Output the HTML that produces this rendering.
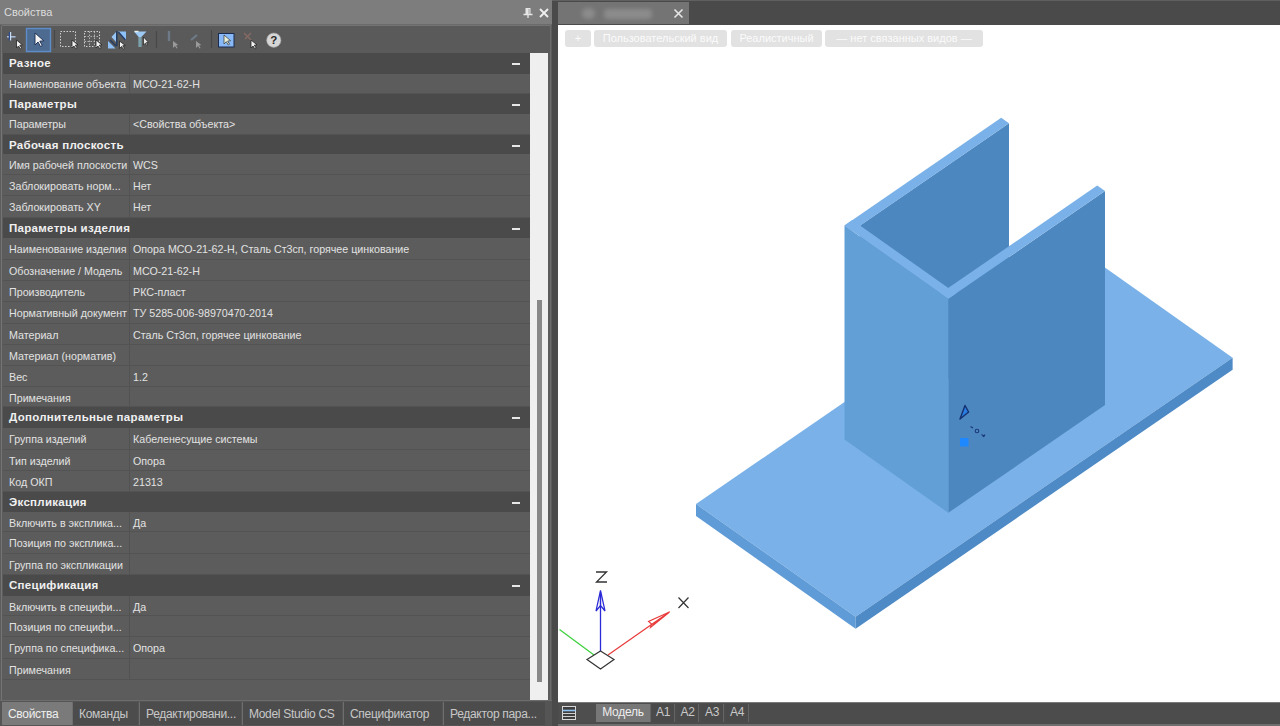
<!DOCTYPE html>
<html><head><meta charset="utf-8">
<style>
*{margin:0;padding:0;box-sizing:border-box}
html,body{width:1280px;height:726px;overflow:hidden;background:#4a4a4a;font-family:"Liberation Sans",sans-serif}
.abs{position:absolute}
#left{left:0;top:0;width:552px;height:726px;background:#5c5c5c}
#title{left:0;top:0;width:552px;height:25px;background:#7d7d7d;border-bottom:1px solid #6a6a6a}
#title .t{left:4px;top:6px;font-size:11px;color:#dcdcdc}
#tb{left:2px;top:25px;width:549px;height:28px;background:#5a5a5a;border-top:1px solid #747474}
#grid{left:3px;top:53px;width:527px;}
.row{position:absolute;left:0;width:527px;background:#5c5c5c;border-bottom:1px solid #535353;font-size:10.7px;color:#e2e2e2;white-space:nowrap}
.row .k{position:absolute;left:6px;top:4.8px}
.row .v{position:absolute;left:130px;top:4.8px}
.row .d{position:absolute;left:126px;top:0;width:1px;height:100%;background:#525252}
.hdr{position:absolute;left:0;width:527px;background:#4a4a4a;font-size:11.5px;letter-spacing:0.3px;font-weight:bold;color:#f0f0f0;white-space:nowrap}
.hdr .k{position:absolute;left:6px;top:3.6px}
.hdr .m{position:absolute;left:509px;top:10px;width:8px;height:2px;background:#e8e8e8}
#scroll{left:530px;top:53px;width:18px;height:647px;background:#efefef}
#thumb{left:537px;top:300px;width:5px;height:382px;background:#888}
#btabs{left:0;top:700px;width:552px;height:26px;background:#555;border-top:1px solid #6c6c6c}
.bt+.bt{border-left:1px solid #6e6e6e}
.bt{position:absolute;top:1px;height:23px;background:#4c4c4c;color:#c8c8c8;font-size:12px;letter-spacing:-0.3px;padding-left:6px;line-height:24px;white-space:nowrap;overflow:hidden}
.bt.on{background:#7a7a7a;color:#eee}
#split{left:552px;top:0;width:6px;height:726px;background:#4a4a4a}
#vp{left:558px;top:25px;width:722px;height:677px;background:#fff}
#vtabs{left:552px;top:0;width:728px;height:25px;background:#4a4a4a;border-top:1px solid #606060}
.vbtn{position:absolute;top:30px;height:17px;background:#e2e2e2;border-radius:3px;color:#fbfbfb;font-size:11px;line-height:17px;text-align:center}
#bstrip{left:558px;top:702px;width:722px;height:24px;background:#4c4c4c;border-top:1px solid #7a7a7a;border-bottom:2px solid #6e6e6e}
.mt{position:absolute;top:1px;height:18px;background:#4a4a4a;border-right:1px solid #646464;color:#c8c8c8;font-size:12px;letter-spacing:-0.25px;line-height:17px;text-align:center}
.mt.on{background:#777;color:#eee}
</style></head><body>
<div id="left" class="abs">
  <div id="title" class="abs"><span class="t abs">Свойства</span>
    <svg class="abs" style="left:520px;top:4px" width="32" height="18">
      <path d="M5.5 4h5v6h-5z" fill="#e6e6e6"/><path d="M3.5 10.5h9M8 10.5v3.5" stroke="#e6e6e6" stroke-width="1.3"/><path d="M9 5v5" stroke="#a0a0a0" stroke-width="1"/>
      <path d="M20 5l8 8M28 5l-8 8" stroke="#f0f0f0" stroke-width="1.8"/>
    </svg>
  </div>
  <div id="tb" class="abs"></div>
  <svg class="abs" style="left:0;top:26px" width="300" height="28">
    <!-- plus + cursor -->
    <path d="M7 10.8h8.5" stroke="#a8bcd8" stroke-width="1.6"/>
    <path d="M9.4 6v8.5" stroke="#2c4a8c" stroke-width="1.2"/>
    <path d="M10.6 6v8.5" stroke="#c8daf4" stroke-width="1.2"/>
    <path d="M16.5 14l0 8 2-2 2 3 1.3-.8-2-3 2.7-.3z" fill="#f2f2f2" stroke="#222" stroke-width=".8"/>
    <!-- active button -->
    <rect x="26.5" y="2.5" width="24" height="23" fill="#4d6b90" stroke="#5d8cc8" stroke-width="1.4"/>
    <path d="M35 7l0 12 3-3 2.5 4.5 1.8-1-2.5-4.3 4-.4z" fill="#f4f4f4" stroke="#1a2a50" stroke-width=".9"/>
    <path d="M54.5 4v18" stroke="#484848" stroke-width="1.2"/>
    <!-- dotted rect -->
    <rect x="60.5" y="5.5" width="15" height="15" fill="none" stroke="#d0d0d0" stroke-width="1" stroke-dasharray="1.5 1.5"/>
    <path d="M72 14l0 8 2-2 2 3 1.3-.8-2-3 2.7-.3z" fill="#f2f2f2" stroke="#222" stroke-width=".8"/>
    <!-- dotted grid -->
    <rect x="84.5" y="5.5" width="15" height="15" fill="none" stroke="#d0d0d0" stroke-width="1" stroke-dasharray="1.5 1.5"/>
    <path d="M84.5 10.5h15M84.5 15.5h15M89.5 5.5v15M94.5 5.5v15" stroke="#c8c8c8" stroke-width=".8" stroke-dasharray="1.5 1.5"/>
    <path d="M96 14l0 8 2-2 2 3 1.3-.8-2-3 2.7-.3z" fill="#f2f2f2" stroke="#222" stroke-width=".8"/>
    <!-- blue triangles -->
    <path d="M116 6v10l-4.5-5z" fill="#98c4f6"/>
    <path d="M116.8 5v15" stroke="#1f3a64" stroke-width="1.4"/>
    <path d="M108 15l7.5 7.5h-7.5z" fill="#8cc0f6"/>
    <path d="M110 14l6 6" stroke="#1f3a64" stroke-width="1.2"/>
    <path d="M118 5.5h8v9z" fill="#8cc0f6"/>
    <path d="M118.5 6l7 8" stroke="#1f3a64" stroke-width="1.2"/>
    <path d="M119.5 15l0 7.5 2-2 1.8 2.6 1.2-.7-1.8-2.6 2.6-.3z" fill="#f2f2f2" stroke="#222" stroke-width=".8"/>
    <!-- funnel -->
    <path d="M134 5.5h12.5l-5.2 5.5v10h-2.6v-10z" fill="#9ccaf4"/>
    <path d="M138.7 11v10h2.6v-10" fill="#7aa0a8"/>
    <path d="M134.5 5.5h4" stroke="#e8f0e8" stroke-width="1.4"/>
    <path d="M143.5 11l0 8 1.8-1.8 1.5 2.4 1-.6-1.5-2.4 2.2-.2z" fill="#e8e8e8" stroke="#222" stroke-width=".7"/>
    <path d="M156.5 5v17" stroke="#484848" stroke-width="1.2"/>
    <!-- greyed -->
    <path d="M169 5v10" stroke="#6e7a88" stroke-width="2.4"/>
    <path d="M173 15l0 7 2-2 1.6 2.5 1-.6-1.6-2.5 2.3-.3z" fill="#9a9a9a"/>
    <path d="M191 14l6-5" stroke="#6e7a88" stroke-width="2.2"/>
    <path d="M196 15l0 7 2-2 1.6 2.5 1-.6-1.6-2.5 2.3-.3z" fill="#9a9a9a"/>
    <path d="M211.5 4v18" stroke="#484848" stroke-width="1.2"/>
    <!-- blue square -->
    <rect x="218.5" y="7.5" width="15.5" height="13.5" fill="#88b8f6" stroke="#1a2a50" stroke-width="1"/>
    <path d="M224 9l0 9 2.3-2.3 2 3.3 1.3-.8-2-3.2 3-.3z" fill="#e8f0d8" stroke="#333" stroke-width=".7"/>
    <!-- red x -->
    <path d="M244 7l8 8M251 7l-6 6" stroke="#8a6a64" stroke-width="1.3"/>
    <path d="M251 14l0 8 2-2 2 3 1.3-.8-2-3 2.7-.3z" fill="#f2f2f2" stroke="#222" stroke-width=".8"/>
    <!-- help -->
    <circle cx="273.8" cy="14.2" r="7.2" fill="#d6d6d6" stroke="#9a9a9a" stroke-width=".6"/>
    <text x="273.8" y="18.4" font-family="Liberation Sans" font-weight="bold" font-size="11.5" fill="#2a2a2a" text-anchor="middle">?</text>
  </svg>
  <div id="grid" class="abs">
    <div class="hdr" style="top:0px;height:21px"><span class="k">Разное</span><span class="m"></span></div>
    <div class="row" style="top:21px;height:20px"><span class="k" style="top:3.5px">Наименование объекта</span><span class="d"></span><span class="v" style="top:3.5px">МСО-21-62-Н</span></div>
    <div class="hdr" style="top:41px;height:20px"><span class="k">Параметры</span><span class="m"></span></div>
    <div class="row" style="top:61px;height:21px"><span class="k" style="top:4px">Параметры</span><span class="d"></span><span class="v" style="top:4px">&lt;Свойства объекта&gt;</span></div>
    <div class="hdr" style="top:82px;height:19px"><span class="k">Рабочая плоскость</span><span class="m"></span></div>
    <div class="row" style="top:101px;height:21px"><span class="k">Имя рабочей плоскости</span><span class="d"></span><span class="v">WCS</span></div>
    <div class="row" style="top:122px;height:21px"><span class="k">Заблокировать норм...</span><span class="d"></span><span class="v">Нет</span></div>
    <div class="row" style="top:143px;height:22px"><span class="k">Заблокировать XY</span><span class="d"></span><span class="v">Нет</span></div>
    <div class="hdr" style="top:165px;height:20px"><span class="k">Параметры изделия</span><span class="m"></span></div>
    <div class="row" style="top:185px;height:22px"><span class="k">Наименование изделия</span><span class="d"></span><span class="v">Опора МСО-21-62-Н, Сталь Ст3сп, горячее цинкование</span></div>
    <div class="row" style="top:207px;height:21px"><span class="k">Обозначение / Модель</span><span class="d"></span><span class="v">МСО-21-62-Н</span></div>
    <div class="row" style="top:228px;height:21px"><span class="k">Производитель</span><span class="d"></span><span class="v">РКС-пласт</span></div>
    <div class="row" style="top:249px;height:22px"><span class="k">Нормативный документ</span><span class="d"></span><span class="v">ТУ 5285-006-98970470-2014</span></div>
    <div class="row" style="top:271px;height:21px"><span class="k">Материал</span><span class="d"></span><span class="v">Сталь Ст3сп, горячее цинкование</span></div>
    <div class="row" style="top:292px;height:21px"><span class="k">Материал (норматив)</span><span class="d"></span><span class="v"></span></div>
    <div class="row" style="top:313px;height:21px"><span class="k">Вес</span><span class="d"></span><span class="v">1.2</span></div>
    <div class="row" style="top:334px;height:20px"><span class="k">Примечания</span><span class="d"></span><span class="v"></span></div>
    <div class="hdr" style="top:354px;height:21px"><span class="k">Дополнительные параметры</span><span class="m"></span></div>
    <div class="row" style="top:375px;height:22px"><span class="k">Группа изделий</span><span class="d"></span><span class="v">Кабеленесущие системы</span></div>
    <div class="row" style="top:397px;height:21px"><span class="k">Тип изделий</span><span class="d"></span><span class="v">Опора</span></div>
    <div class="row" style="top:418px;height:21px"><span class="k">Код ОКП</span><span class="d"></span><span class="v">21313</span></div>
    <div class="hdr" style="top:439px;height:20px"><span class="k">Экспликация</span><span class="m"></span></div>
    <div class="row" style="top:459px;height:20px"><span class="k">Включить в эксплика...</span><span class="d"></span><span class="v">Да</span></div>
    <div class="row" style="top:479px;height:22px"><span class="k">Позиция по эксплика...</span><span class="d"></span><span class="v"></span></div>
    <div class="row" style="top:501px;height:21px"><span class="k">Группа по экспликации</span><span class="d"></span><span class="v"></span></div>
    <div class="hdr" style="top:522px;height:21px"><span class="k">Спецификация</span><span class="m"></span></div>
    <div class="row" style="top:543px;height:20px"><span class="k">Включить в специфи...</span><span class="d"></span><span class="v">Да</span></div>
    <div class="row" style="top:563px;height:21px"><span class="k">Позиция по специфи...</span><span class="d"></span><span class="v"></span></div>
    <div class="row" style="top:584px;height:22px"><span class="k">Группа по специфика...</span><span class="d"></span><span class="v">Опора</span></div>
    <div class="row" style="top:606px;height:21px"><span class="k">Примечания</span><span class="d"></span><span class="v"></span></div>
  </div>
  <div class="abs" style="left:1px;top:26px;width:1px;height:674px;background:#747474"></div>
  <div class="abs" style="left:550px;top:26px;width:1px;height:674px;background:#6c6c6c"></div>
  <div id="scroll" class="abs"></div>
  <div id="thumb" class="abs"></div>
  <div id="btabs" class="abs">
    <div class="bt on" style="left:2px;width:70px">Свойства</div>
    <div class="bt" style="left:72px;width:66px">Команды</div>
    <div class="bt" style="left:139px;width:102px">Редактировани...</div>
    <div class="bt" style="left:242px;width:100px">Model Studio CS</div>
    <div class="bt" style="left:343px;width:99px">Спецификатор</div>
    <div class="bt" style="left:443px;width:102px">Редактор пара...</div>
  </div>
</div>
<div id="split" class="abs"></div>
<div id="vtabs" class="abs">
  <div class="abs" style="left:6px;top:1px;width:131px;height:22px;background:#747474"></div>
  <div class="abs" style="left:30px;top:7px;width:13px;height:11px;border-radius:6px;background:#8c8c8c;filter:blur(2px)"></div>
  <div class="abs" style="left:52px;top:8px;width:48px;height:10px;border-radius:4px;background:#8c8c8c;filter:blur(2px)"></div>
  <svg class="abs" style="left:120px;top:7px" width="14" height="12"><path d="M2.5 1.5l8 8M10.5 1.5l-8 8" stroke="#e6e6e6" stroke-width="1.6"/></svg>
</div>
<div id="vp" class="abs">
  <div class="vbtn" style="left:7px;top:5px;width:26px">+</div>
  <div class="vbtn" style="left:36px;top:5px;width:133px">Пользовательский вид</div>
  <div class="vbtn" style="left:173px;top:5px;width:91px">Реалистичный</div>
  <div class="vbtn" style="left:267px;top:5px;width:158px">— нет связанных видов —</div>
</div>
<svg class="abs" style="left:0;top:0" width="1280" height="726">
  <polygon points="696.0,504.0 855.6,616.7 1232.6,357.7 1073.1,245.0" fill="#79b1e8"/>
  <polygon points="696.0,504.0 855.6,616.7 855.6,628.7 696.0,516.0" fill="#5f9bd6"/>
  <polygon points="855.6,616.7 1232.6,357.7 1232.6,369.7 855.6,628.7" fill="#4d8ac6"/>
  <polygon points="860.1,439.6 1009.0,337.3 1009.0,123.3 860.1,225.6" fill="#4d87bf"/>
  <polygon points="844.5,225.5 1001.2,117.8 1009.0,123.3 852.3,231.0" fill="#79b1e8"/>
  <polygon points="948.3,512.8 1105.0,405.1 1105.0,191.1 948.3,298.8" fill="#4d87bf"/>
  <polygon points="940.5,293.3 1097.2,185.6 1105.0,191.1 948.3,298.8" fill="#79b1e8"/>
  <polygon points="844.5,439.5 948.3,512.8 948.3,298.8 844.5,225.5" fill="#629fd7"/>
  <polygon points="844.5,225.5 948.3,298.8 956.1,293.4 852.3,220.1" fill="#79b1e8"/>
  <!-- gizmo -->
  <path d="M960 419l5-13.5 3.6 6.5z" fill="#2a7ee6" stroke="#14306e" stroke-width="1.4" stroke-linejoin="round"/>
  <path d="M970.5 426.5l2.5 1.5" stroke="#1b3a78" stroke-width="1.3"/><circle cx="977" cy="431" r="1.8" fill="none" stroke="#1b3a78" stroke-width="1.1"/><path d="M981.5 434.5l3 2M983 437l2-2.5" stroke="#1b3a78" stroke-width="1.2"/>
  <rect x="960" y="438" width="8.5" height="8.5" fill="#1e88ff"/>
  <!-- UCS -->
  <path d="M559.5 629.5L594 655" stroke="#3bd03b" stroke-width="1.2"/>
  <path d="M608 655L668 613" stroke="#e83a3a" stroke-width="1.2"/>
  <path d="M669.5 612l-21 9.5 3 2.5-1 3.5z M669.5 612l-17 13" fill="none" stroke="#e83a3a" stroke-width="1.1"/>
  <path d="M600.5 651V592" stroke="#2a2ad8" stroke-width="1.3"/>
  <path d="M600.5 590.5l-4.5 20.5 4.5-5.5 4.5 5.5z M600.5 592v14" fill="none" stroke="#2a2ad8" stroke-width="1.2"/>
  <path d="M600.5 651l13.5 8.5-13.5 9.5-13.5-9.5z" fill="#fff" stroke="#333" stroke-width="1.2"/>
  <path d="M596 572h10.5l-10 10h10.5" fill="none" stroke="#333" stroke-width="1.3"/>
  <path d="M678.5 597.5l10 10.5M688.5 597.5l-10 10.5" stroke="#333" stroke-width="1.2"/>
</svg>
<div id="bstrip" class="abs">
  <svg class="abs" style="left:0;top:0" width="38" height="22"><rect x="1" y="1" width="37" height="18" fill="#4e4e4e"/><rect x="4.5" y="3.5" width="13" height="13" fill="#3e3e3e" stroke="#d8d8d8" stroke-width="1"/><path d="M4.5 10.5h13M4.5 13.5h13" stroke="#cfcfcf" stroke-width="1"/><path d="M4.5 7.5h13" stroke="#8cc0f0" stroke-width="1.6"/></svg>
  <div class="mt on" style="left:38px;width:55px">Модель</div>
  <div class="mt" style="left:94px;width:23px">A1</div>
  <div class="mt" style="left:119px;width:22px">A2</div>
  <div class="mt" style="left:143px;width:23px">A3</div>
  <div class="mt" style="left:168px;width:23px">A4</div>
</div>
</body></html>
